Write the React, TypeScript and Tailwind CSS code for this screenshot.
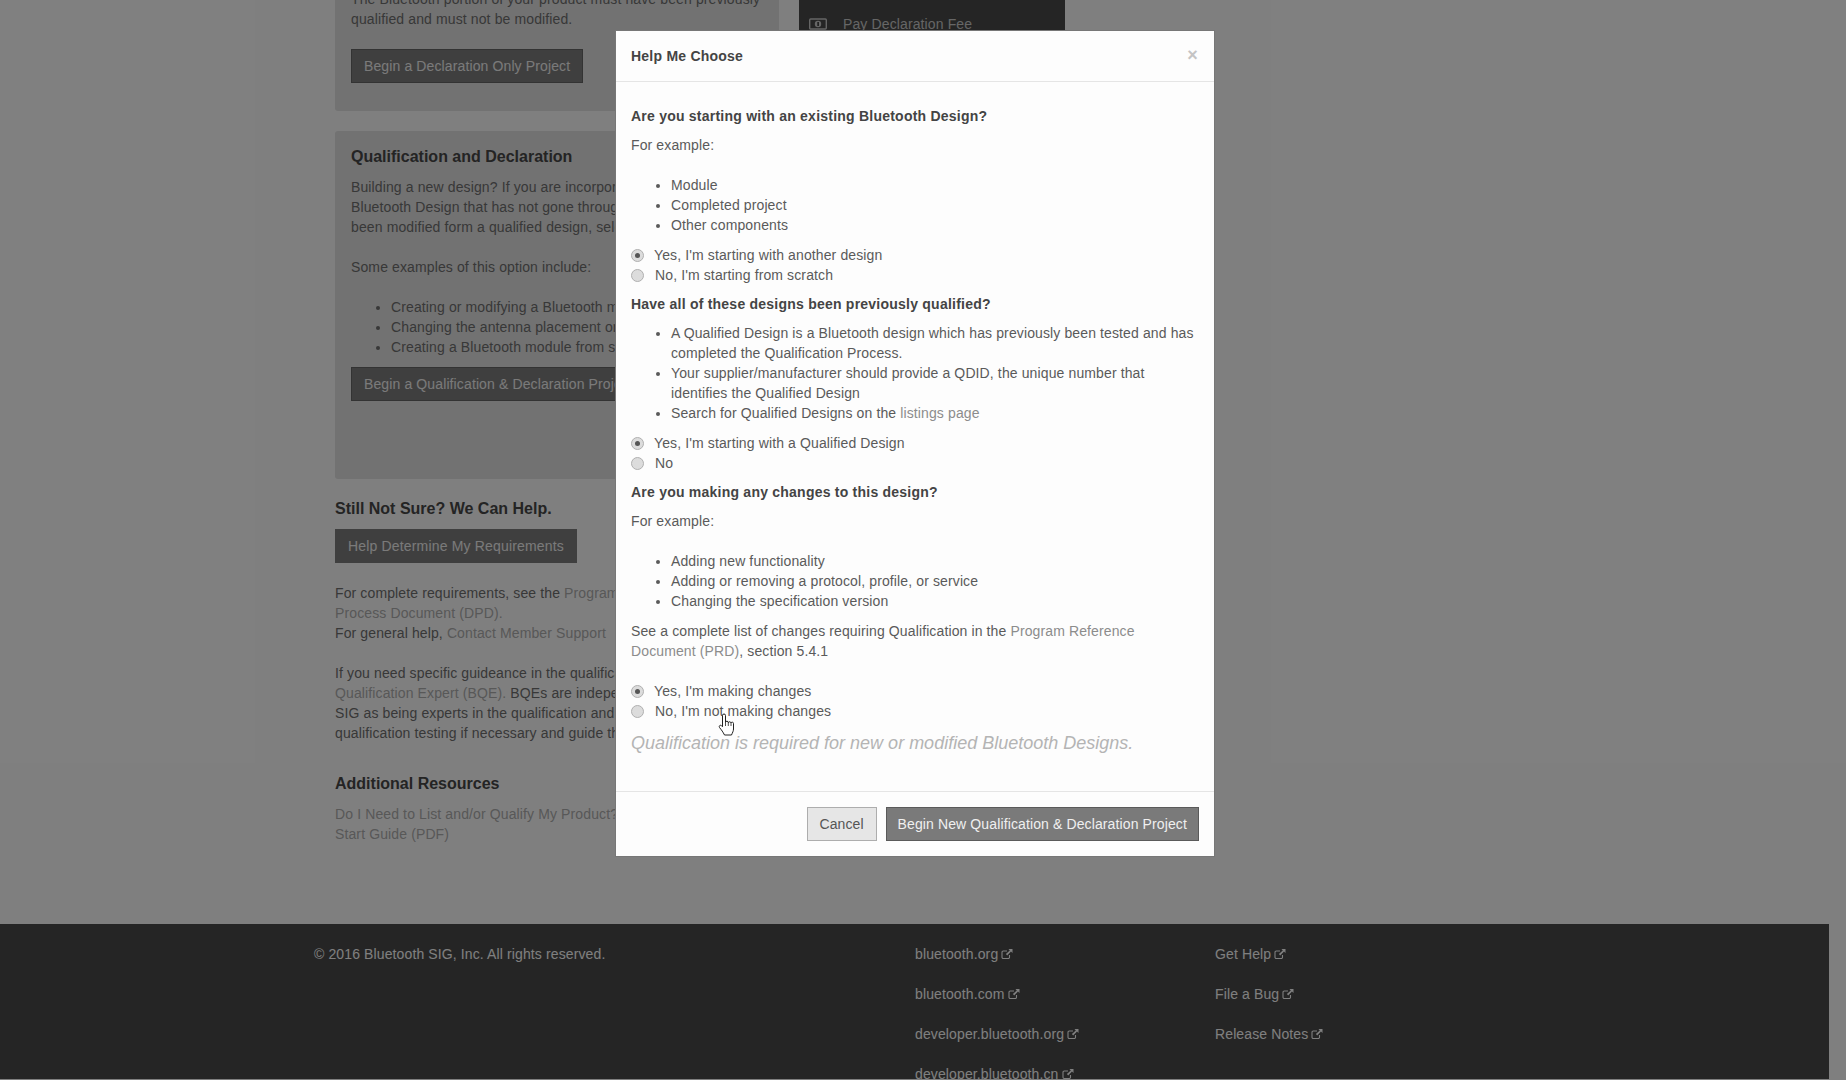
function ExternalIcon() {
  return (
    <svg viewBox="0 0 12 12" className="inline-block w-[12px] h-[12px] ml-[3px] align-[-1px]" fill="none" stroke="currentColor">
      <path d="M8.500 7v2.200a1.300 1.300 0 0 1-1.300 1.300H2.300A1.300 1.300 0 0 1 1 9.200V4.300A1.300 1.300 0 0 1 2.300 3H6" strokeWidth="1.100" />
      <path d="M7.500 1H11.500V5L10 3.600 6.200 7.400 4.900 6.100 8.800 2.400z" fill="currentColor" stroke="none" />
    </svg>
  );
}

function MoneyIcon() {
  return (
    <svg viewBox="0 0 18 12" className="w-[18px] h-[12px] shrink-0" fill="none" stroke="currentColor">
      <rect x="0.700" y="1" width="16.600" height="10" rx="1" strokeWidth="1.400" />
      <circle cx="9" cy="6" r="3.200" fill="currentColor" stroke="none" />
      <rect x="8.400" y="4" width="1.400" height="4" fill="#262626" stroke="none" />
    </svg>
  );
}

function HandCursor() {
  return (
    <svg viewBox="0 0 17 23" className="absolute left-[718px] top-[713px] w-[17px] h-[23px]" fill="#fff" stroke="#222" strokeWidth="1">
      <path d="M4.500 2.500a1.500 1.500 0 0 1 3 0V9.500a1.400 1.400 0 0 1 2.800.2 1.400 1.400 0 0 1 2.700.3 1.300 1.300 0 0 1 2.500.6V16c0 2-1 3.500-2 6H6.500C5 19 3.500 17 1.500 14.500c-1-1.500.8-3 2-1.800l1 1z" />
      <path d="M7.500 9.500V13M10.300 9.700V13M13 10V13" fill="none" strokeWidth="0.800" />
    </svg>
  );
}

function Radio({ label, checked }: { label: string; checked?: boolean }) {
  return (
    <label className="flex items-center h-5">
      <span className="w-[13px] h-[13px] rounded-full border border-[#b0b0b0] bg-[#dcdcdc] flex items-center justify-center shrink-0">
        {checked && <span className="w-[5px] h-[5px] rounded-full bg-[#555]" />}
      </span>
      <span className={checked ? "ml-[10px]" : "ml-[11px]"}>{label}</span>
    </label>
  );
}

function Bullets({ items }: { items: React.ReactNode[] }) {
  return (
    <ul className="list-disc pl-10">
      {items.map((item, i) => (
        <li key={i}>{item}</li>
      ))}
    </ul>
  );
}

const PAGE_LINK = "text-[#b0b0b0]";
const MODAL_LINK = "text-[#8c8c8c]";
const PAGE_HEADING = "text-base leading-[22px] font-bold tracking-normal text-[#484848]";
const MODAL_HEADING = "font-bold tracking-[0.23px] text-[#444]";

function Page() {
  return (
    <div className="-mt-[31px]">
      <div className="flex">
        <div className="ml-[335px] w-[444px] shrink-0">
          <div className="bg-[#e4e4e4] rounded-[3px] px-4 pt-5 pb-7">
            <p>
              The Bluetooth portion of your product must have been previously
              <br />
              qualified and must not be modified.
            </p>
            <button className="mt-5 h-[34px] px-3 bg-[#7f7f7f] border border-[#666] text-[#f4f4f4]">Begin a Declaration Only Project</button>
          </div>
          <div className="mt-[20px] bg-[#e4e4e4] rounded-[3px] px-4 pt-[15px] pb-[78px]">
            <h3 className={PAGE_HEADING}>Qualification and Declaration</h3>
            <p className="mt-[9px] whitespace-nowrap">
              Building a new design? If you are incorporating a
              <br />
              Bluetooth Design that has not gone through
              <br />
              been modified form a qualified design, select
            </p>
            <p className="mt-5">Some examples of this option include:</p>
            <ul className="list-disc pl-10 mt-5 whitespace-nowrap">
              <li>Creating or modifying a Bluetooth module</li>
              <li>Changing the antenna placement or design</li>
              <li>Creating a Bluetooth module from scratch</li>
            </ul>
            <button className="mt-[10px] h-[34px] px-3 bg-[#7f7f7f] border border-[#666] text-[#f4f4f4] whitespace-nowrap">Begin a Qualification &amp; Declaration Project</button>
          </div>
          <h3 className={`mt-[19px] ${PAGE_HEADING}`}>Still Not Sure? We Can Help.</h3>
          <button className="mt-[9px] h-[34px] px-[13px] tracking-[0.17px] bg-[#7f7f7f] text-[#f4f4f4]">Help Determine My Requirements</button>
          <p className="mt-5 whitespace-nowrap">
            For complete requirements, see the <span className={PAGE_LINK}>Program Reference</span>
            <br />
            <span className={PAGE_LINK}>Process Document (DPD).</span>
            <br />
            For general help, <span className={PAGE_LINK}>Contact Member Support</span>
          </p>
          <p className="mt-5 whitespace-nowrap">
            If you need specific guideance in the qualification
            <br />
            <span className={PAGE_LINK}>Qualification Expert (BQE).</span> BQEs are independent
            <br />
            SIG as being experts in the qualification and
            <br />
            qualification testing if necessary and guide the
          </p>
          <h3 className={`mt-[30px] ${PAGE_HEADING}`}>Additional Resources</h3>
          <p className={`mt-[9px] whitespace-nowrap ${PAGE_LINK}`}>
            Do I Need to List and/or Qualify My Product?
            <br />
            Start Guide (PDF)
          </p>
        </div>
        <div className="ml-5 w-[266px] h-[61px] shrink-0 bg-[#4b4b4b]">
          <div className="flex items-center gap-[16px] pl-[10px] pt-[45px] text-[#ccc]">
            <MoneyIcon />
            <span>Pay Declaration Fee</span>
          </div>
        </div>
      </div>
      <footer className="mt-[80px] w-[1829px] h-[155px] bg-[#4a4a4a] text-[#ffffff] overflow-hidden">
        <div className="flex pt-5">
          <div className="ml-[314px] w-[601px] shrink-0">© 2016 Bluetooth SIG, Inc. All rights reserved.</div>
          <div className="w-[300px] shrink-0 flex flex-col gap-5">
            <a>bluetooth.org<ExternalIcon /></a>
            <a>bluetooth.com<ExternalIcon /></a>
            <a>developer.bluetooth.org<ExternalIcon /></a>
            <a>developer.bluetooth.cn<ExternalIcon /></a>
          </div>
          <div className="flex flex-col gap-5">
            <a>Get Help<ExternalIcon /></a>
            <a>File a Bug<ExternalIcon /></a>
            <a>Release Notes<ExternalIcon /></a>
          </div>
        </div>
      </footer>
    </div>
  );
}

function HelpModal() {
  return (
    <div className="w-[600px] h-[827px] mt-[30px] bg-[#fdfdfd] border border-[#777] flex flex-col text-[#5a5a5a]">
      <div className="relative h-[51px] px-[15px] pt-[15px] border-b border-[#e5e5e5]">
        <h4 className={MODAL_HEADING}>Help Me Choose</h4>
        <span className="absolute right-[16px] top-[14px] text-[18px] leading-5 font-bold text-[#c4c4c4]">×</span>
      </div>
      <div className="flex-1 px-[15px] pt-6">
        <h5 className={MODAL_HEADING}>Are you starting with an existing Bluetooth Design?</h5>
        <p className="mt-[9px] mb-5">For example:</p>
        <Bullets items={["Module", "Completed project", "Other components"]} />
        <div className="mt-[10px]">
          <Radio checked label="Yes, I'm starting with another design" />
          <Radio label="No, I'm starting from scratch" />
        </div>
        <h5 className={`mt-[9px] mb-[9px] ${MODAL_HEADING}`}>Have all of these designs been previously qualified?</h5>
        <Bullets
          items={[
            "A Qualified Design is a Bluetooth design which has previously been tested and has completed the Qualification Process.",
            "Your supplier/manufacturer should provide a QDID, the unique number that identifies the Qualified Design",
            <>
              Search for Qualified Designs on the <a className={MODAL_LINK}>listings page</a>
            </>,
          ]}
        />
        <div className="mt-[10px]">
          <Radio checked label="Yes, I'm starting with a Qualified Design" />
          <Radio label="No" />
        </div>
        <h5 className={`mt-[9px] ${MODAL_HEADING}`}>Are you making any changes to this design?</h5>
        <p className="mt-[9px] mb-5">For example:</p>
        <Bullets items={["Adding new functionality", "Adding or removing a protocol, profile, or service", "Changing the specification version"]} />
        <p className="mt-[10px] pr-10">
          See a complete list of changes requiring Qualification in the <a className={MODAL_LINK}>Program Reference Document (PRD)</a>, section 5.4.1
        </p>
        <div className="mt-5">
          <Radio checked label="Yes, I'm making changes" />
          <Radio label="No, I'm not making changes" />
        </div>
        <p className="mt-[10px] text-[18px] leading-[25px] italic tracking-normal text-[#b4b4b4]">Qualification is required for new or modified Bluetooth Designs.</p>
      </div>
      <div className="h-[65px] border-t border-[#e5e5e5] px-[15px] pt-[15px] flex justify-end gap-[9px]">
        <button className="h-[34px] w-[70px] bg-[#e6e6e6] border border-[#adadad] text-[#555]">Cancel</button>
        <button className="h-[34px] px-[11px] bg-[#7a7a7a] border border-[#5a5a5a] text-[#f0f0f0] whitespace-nowrap">Begin New Qualification &amp; Declaration Project</button>
      </div>
    </div>
  );
}

export default function App() {
  return (
    <div className="relative h-[1080px] overflow-hidden bg-white text-[14px] leading-5 tracking-[0.12px] text-[#707070] font-['Liberation_Sans',Arial,sans-serif]">
      <Page />
      {/* Backdrop and dialog */}
      <div className="absolute inset-0 bg-black/50 flex justify-center pr-4 items-start">
        <HelpModal />
      </div>
      <HandCursor />
    </div>
  );
}
